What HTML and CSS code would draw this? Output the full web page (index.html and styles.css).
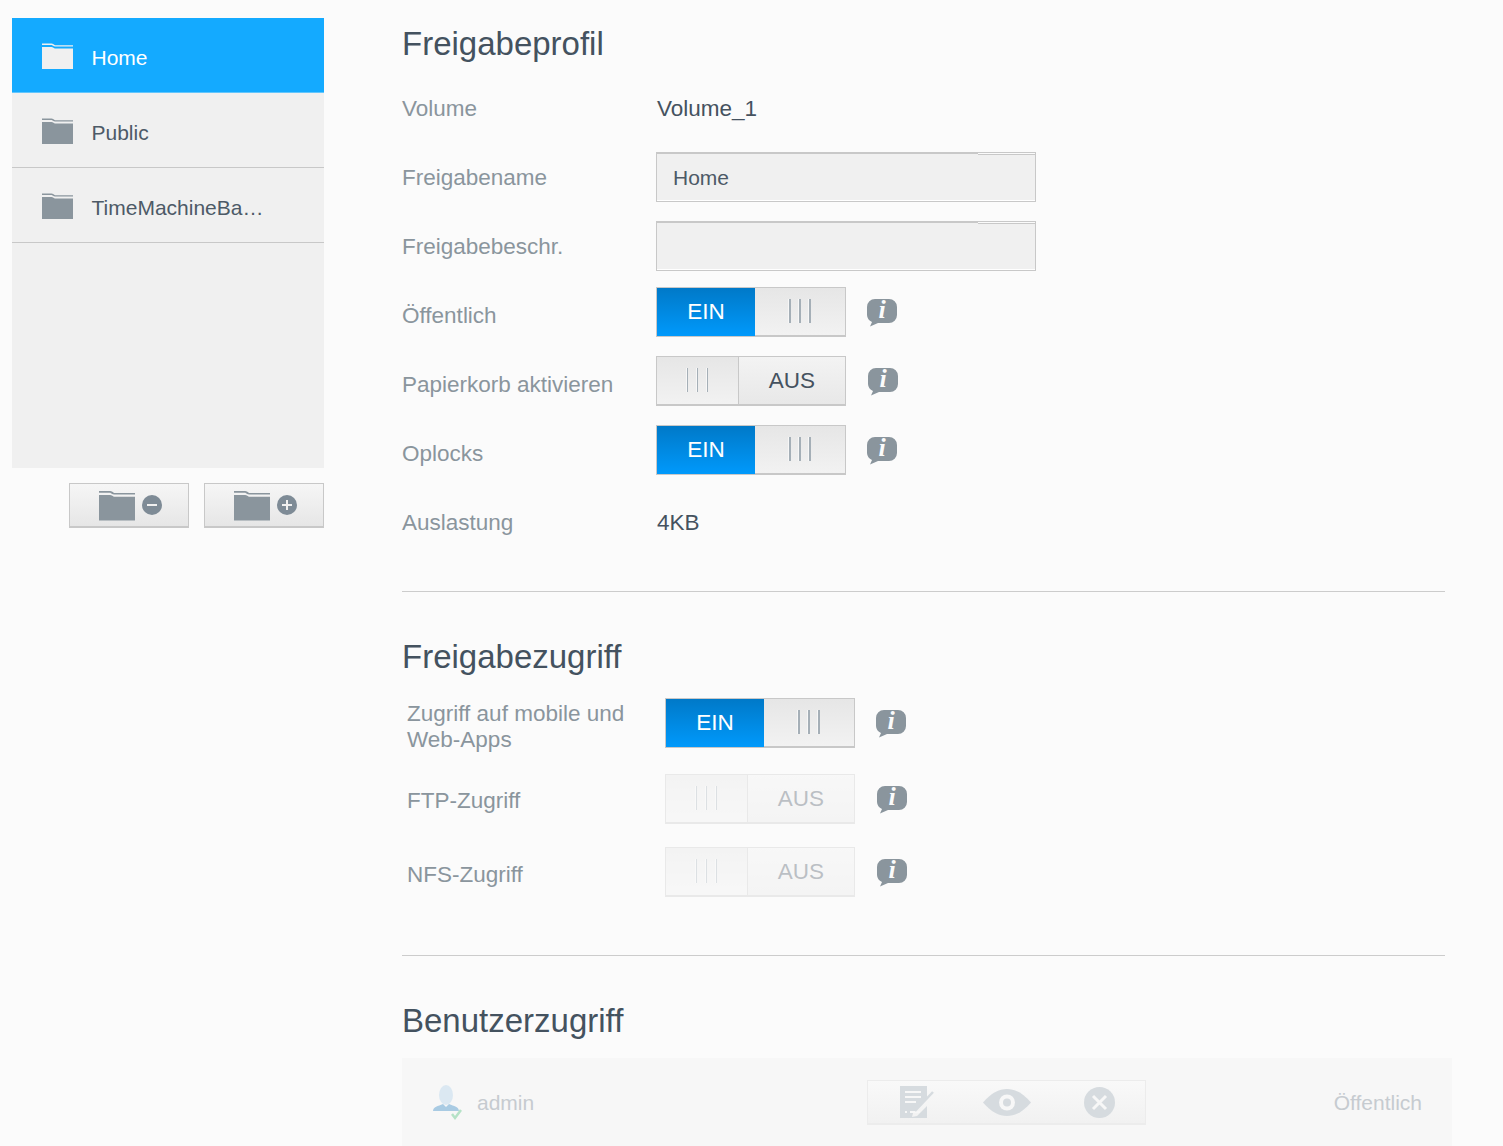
FILE: index.html
```html
<!DOCTYPE html>
<html lang="de">
<head>
<meta charset="utf-8">
<title>Freigaben</title>
<link rel="stylesheet" href="styles.css">
</head>
<body>
<svg class="defs" width="0" height="0" aria-hidden="true">
  <symbol id="folder" viewBox="0 0 31 26">
    <path d="M0 0.500h9.500q1 0 2 .7l1.500 1h18v1.300H13q-1 0-2-.7l-1.300-.8H0z"/>
    <path d="M0 4h9.500q1 0 2 .7l1.300.8H31V26H0z"/>
  </symbol>
  <symbol id="bubble" viewBox="0 0 30 28">
    <path d="M8 0h14a8 8 0 0 1 8 8v8a8 8 0 0 1-8 8H11l-8 3.500 2-4.500A8 8 0 0 1 0 16V8a8 8 0 0 1 8-8z"/>
  </symbol>
</svg>
<div class="page">
  <aside class="sidebar">
    <ul class="shares">
      <li class="share share-active"><svg class="share-icon"><use href="#folder"/></svg><span class="share-name">Home</span></li>
      <li class="share"><svg class="share-icon"><use href="#folder"/></svg><span class="share-name">Public</span></li>
      <li class="share"><svg class="share-icon"><use href="#folder"/></svg><span class="share-name">TimeMachineBa…</span></li>
    </ul>
    <div class="share-actions">
      <button class="share-btn" type="button" aria-label="Entfernen">
        <svg class="btn-folder"><use href="#folder"/></svg>
        <svg class="btn-badge" viewBox="0 0 20 20"><circle cx="10" cy="10" r="10"/><path class="badge-mark" d="M5 10h10"/></svg>
      </button>
      <button class="share-btn" type="button" aria-label="Hinzufügen">
        <svg class="btn-folder"><use href="#folder"/></svg>
        <svg class="btn-badge" viewBox="0 0 20 20"><circle cx="10" cy="10" r="10"/><path class="badge-mark" d="M5 10h10M10 5v10"/></svg>
      </button>
    </div>
  </aside>

  <main class="main">
    <h2 class="title">Freigabeprofil</h2>
    <div class="row"><span class="label">Volume</span><span class="value">Volume_1</span></div>
    <div class="row"><span class="label">Freigabename</span><input class="field" type="text" value="Home"></div>
    <div class="row"><span class="label">Freigabebeschr.</span><input class="field" type="text"></div>
    <div class="row">
      <span class="label">Öffentlich</span>
      <div class="toggle toggle-on"><span class="t-text">EIN</span><span class="t-grip"><i></i><i></i><i></i></span></div>
      <span class="info"><svg class="bubble"><use href="#bubble"/></svg><span class="info-i">i</span></span>
    </div>
    <div class="row">
      <span class="label">Papierkorb aktivieren</span>
      <div class="toggle toggle-off"><span class="t-grip"><i></i><i></i><i></i></span><span class="t-text">AUS</span></div>
      <span class="info info-shift"><svg class="bubble"><use href="#bubble"/></svg><span class="info-i">i</span></span>
    </div>
    <div class="row">
      <span class="label">Oplocks</span>
      <div class="toggle toggle-on"><span class="t-text">EIN</span><span class="t-grip"><i></i><i></i><i></i></span></div>
      <span class="info"><svg class="bubble"><use href="#bubble"/></svg><span class="info-i">i</span></span>
    </div>
    <div class="row row-last"><span class="label">Auslastung</span><span class="value">4KB</span></div>
    <hr class="rule">

    <h2 class="title">Freigabezugriff</h2>
    <div class="access">
      <div class="row row-a">
        <span class="label label-a">Zugriff auf mobile und<br>Web-Apps</span>
        <div class="toggle toggle-on"><span class="t-text">EIN</span><span class="t-grip"><i></i><i></i><i></i></span></div>
        <span class="info"><svg class="bubble"><use href="#bubble"/></svg><span class="info-i">i</span></span>
      </div>
      <div class="row row-b">
        <span class="label label-a">FTP-Zugriff</span>
        <div class="toggle toggle-off toggle-disabled"><span class="t-grip"><i></i><i></i><i></i></span><span class="t-text">AUS</span></div>
        <span class="info info-shift"><svg class="bubble"><use href="#bubble"/></svg><span class="info-i">i</span></span>
      </div>
      <div class="row row-c">
        <span class="label label-a">NFS-Zugriff</span>
        <div class="toggle toggle-off toggle-disabled"><span class="t-grip"><i></i><i></i><i></i></span><span class="t-text">AUS</span></div>
        <span class="info info-shift"><svg class="bubble"><use href="#bubble"/></svg><span class="info-i">i</span></span>
      </div>
    </div>
    <hr class="rule rule-b">

    <h2 class="title title-c">Benutzerzugriff</h2>
    <div class="user-row">
      <div class="user">
        <svg class="user-icon" viewBox="0 0 30 36">
          <ellipse class="u-head" cx="13" cy="10" rx="7" ry="10"/>
          <path class="u-body" d="M0 26c0-4 5-5 10-7l3 3 3-3c5 2 10 3 10 7z"/>
          <path class="u-check" d="M19 29l3 4 6-8"/>
        </svg>
        <span class="user-name">admin</span>
      </div>
      <div class="perm">
        <svg class="perm-note" viewBox="0 0 35 32">
          <path class="p-fill" d="M0 0h27v13L13 27l-1 4 5-1 10-10v12H0z"/>
          <path class="p-cut" d="M5 6h16M5 11h16M5 16h11M5 26h2M10 26h10"/>
          <path class="p-pen" d="M15 25l18-19"/>
        </svg>
        <svg class="perm-eye" viewBox="0 0 48 27">
          <path class="p-fill" d="M0 13.500C8 4 16 0 24 0s16 4 24 13.500C40 23 32 27 24 27S8 23 0 13.500z"/>
          <circle class="p-ring" cx="24" cy="13.500" r="8"/>
          <circle class="p-fill" cx="24" cy="13.500" r="4"/>
        </svg>
        <svg class="perm-x" viewBox="0 0 31 31">
          <circle class="p-fill" cx="15.500" cy="15.500" r="15.500"/>
          <path class="p-cross" d="M9 9l13 13M22 9L9 22"/>
        </svg>
      </div>
      <span class="user-scope">Öffentlich</span>
    </div>
  </main>
</div>
</body>
</html>
```

FILE: styles.css
```css
* { box-sizing: border-box; }

html, body {
  margin: 0;
  height: 1146px;
  overflow: hidden;
  background: #fbfbfb;
  font-family: "Liberation Sans", Arial, sans-serif;
}

.defs { position: absolute; }

.page { display: flex; align-items: flex-start; }

/* Sidebar */
.sidebar { width: 312px; margin: 18px 0 0 12px; flex: none; }

.shares {
  list-style: none;
  margin: 0;
  padding: 0;
  height: 450px;
  background: #f0f0f0;
}

.share {
  display: flex;
  align-items: center;
  height: 75px;
  padding-left: 30px;
  border-bottom: 1px solid #c8c8c8;
  color: #4d5a67;
  font-size: 21px;
}

.share-active {
  background: #14aaff;
  border-bottom-color: #62c6fd;
  color: #fff;
}

.share-icon { width: 31px; height: 26px; fill: #8a959d; margin: 2px 19px 0 0; }
.share-active .share-icon { fill: #f0f0f0; }
.share-name { padding-top: 6px; margin-left: -0.500px; }

.share-actions { display: flex; justify-content: flex-end; gap: 15px; margin-top: 15px; }

.share-btn {
  display: flex;
  align-items: center;
  justify-content: center;
  gap: 7px;
  width: 120px;
  height: 45px;
  padding: 0 0 0 2px;
  background: linear-gradient(#f6f6f6, #e6e6e6);
  border: 1px solid #c8c8c8;
  border-bottom-width: 2px;
}

.btn-folder { width: 36px; height: 31px; fill: #8a959d; }
.btn-badge { width: 20px; height: 20px; fill: #7e8b96; }
.badge-mark { fill: none; stroke: #f0f0f0; stroke-width: 2; }

/* Main */
.main { width: 1050px; margin-left: 78px; flex: none; color: #45525f; }

.title {
  margin: 18px 0 15px;
  height: 50px;
  padding-top: 1px;
  line-height: 50px;
  font-size: 33px;
  font-weight: 400;
  color: #44525f;
}

.rule { width: 1043px; height: 1px; margin: 44px 0 39px; border: 0; background: #cccccc; }
.rule + .title { margin-top: 0; margin-bottom: 20px; }
.rule-b { margin-top: 55px; }
.rule-b + .title { margin-bottom: 13px; }

.row {
  display: flex;
  align-items: center;
  height: 50px;
  margin-bottom: 19px;
}
.row-last, .row-c { margin-bottom: 0; }
.row-a { margin-bottom: 26px; }
.row-b { margin-bottom: 23px; }

.label { width: 254px; flex: none; padding-top: 1px; font-size: 22.5px; color: #8a959d; }
.label-a { width: 263px; padding-left: 5px; line-height: 26px; }
.row-b .label-a { padding-top: 0; padding-bottom: 2px; }
.row-c .label-a { padding-top: 0; }
.value { font-size: 22.5px; padding: 1px 0 0 1px; color: #45525f; }

.field {
  width: 380px;
  height: 50px;
  padding: 1px 16px 0;
  border: 1px solid #c8c8c8;
  outline: 0;
  color: #4d5a67;
  font: 21px "Liberation Sans", Arial, sans-serif;
  background:
    linear-gradient(#c8c8c8, #c8c8c8) 0 0 / 321px 1px no-repeat,
    linear-gradient(#c8c8c8, #c8c8c8) 100% 1px / 57px 1px no-repeat,
    linear-gradient(#fbfbfb, #fbfbfb) 100% 0 / 57px 1px no-repeat,
    #f0f0f0;
  box-shadow: inset 0 -1px #ffffff;
}

/* Toggle */
.toggle {
  display: flex;
  width: 190px;
  height: 50px;
  margin-top: -6px;
  border: 1px solid #c8c8c8;
  border-bottom-width: 2px;
  flex: none;
  font-size: 22.5px;
}

.t-text {
  display: flex;
  align-items: center;
  justify-content: center;
}
.t-grip {
  display: flex;
  align-items: center;
  justify-content: center;
  gap: 8.500px;
  padding-bottom: 2px;
  background: linear-gradient(#e6e6e6, #f2f2f2);
}
.t-grip i { display: block; width: 1.500px; height: 24px; background: #a5afb7; box-shadow: -1px 0 #f7f7f7; }

.toggle-on .t-text { width: 98px; margin-bottom: -1px; color: #fff; background: linear-gradient(#0079c8, #0099fb); }
.toggle-on .t-grip { flex: 1; }

.toggle-off .t-grip { width: 82px; border-right: 1px solid #c8c8c8; }
.toggle-off .t-text { flex: 1; color: #45525f; background: linear-gradient(#f3f3f3, #e8e8e8); }

.toggle-disabled { opacity: .35; }

/* Info bubble */
.info {
  position: relative;
  display: block;
  width: 30px;
  height: 28px;
  margin: -4px 0 0 21px;
  flex: none;
}
.info-shift { margin-left: 22px; }
.bubble { display: block; width: 30px; height: 28px; fill: #8a959d; }
.info-i {
  position: absolute;
  top: 0;
  left: 0;
  width: 30px;
  line-height: 22px;
  text-align: center;
  color: #fbfbfb;
  font: italic 700 26px / 22px "Liberation Serif", serif;
}

/* User row */
.user-row {
  display: flex;
  align-items: center;
  height: 100px;
  padding: 0 30px 12px 0;
  background: #f7f7f7;
  color: #c6cbd0;
  font-size: 21px;
}

.user { display: flex; align-items: center; width: 465px; padding-left: 31px; }
.user-icon { width: 30px; height: 36px; margin: 2px 14px 0 0; }
.user-name { padding-top: 2px; }
.u-head { fill: #dbe8f2; }
.u-body { fill: #a9cbe3; }
.u-check { fill: none; stroke: #b5e2c7; stroke-width: 2.500; }

.perm {
  display: flex;
  align-items: center;
  width: 279px;
  height: 45px;
  padding: 1px 0 0 32px;
  background: linear-gradient(#f9f9f9, #f1f1f1);
  border: 1px solid #ececec;
  border-bottom-width: 2px;
}

.perm-note { width: 35px; height: 32px; }
.perm-eye { width: 48px; height: 27px; margin-left: 48px; }
.perm-x { width: 31px; height: 31px; margin-left: 53px; }
.p-fill { fill: #d6dbdf; }
.p-cut { fill: none; stroke: #f7f7f7; stroke-width: 2; }
.p-pen { fill: none; stroke: #d6dbdf; stroke-width: 2.500; }
.p-ring { fill: #f7f7f7; }
.p-cross { fill: none; stroke: #f7f7f7; stroke-width: 3; }

.user-scope { margin-left: auto; padding-top: 2px; }
```
